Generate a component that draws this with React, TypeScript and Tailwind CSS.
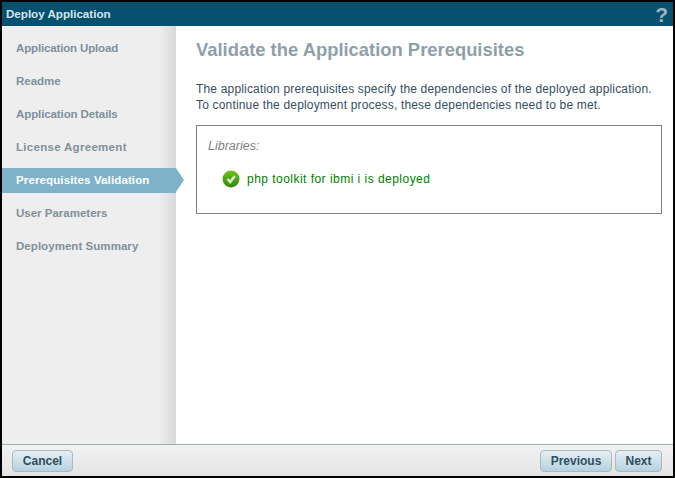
const STEPS = [
  { label: "Application Upload", tracking: "tracking-[-0.15px]" },
  { label: "Readme", tracking: "" },
  { label: "Application Details", tracking: "tracking-[-0.1px]" },
  { label: "License Agreement", tracking: "tracking-[0.3px]" },
  { label: "Prerequisites Validation", tracking: "tracking-[0.13px]" },
  { label: "User Parameters", tracking: "" },
  { label: "Deployment Summary", tracking: "tracking-[0.05px]" },
];
const ACTIVE = "Prerequisites Validation";

function WizardButton({ label, width }: { label: string; width: string }) {
  return (
    <button
      className={`${width} h-[22px] rounded-[4px] border border-[#a9b9c2] bg-gradient-to-b from-[#e6eff3] to-[#b4d2e0] pt-px text-[12px] font-bold text-[#2f4f60]`}
    >
      {label}
    </button>
  );
}

function CheckIcon() {
  return (
    <svg width="18" height="18" viewBox="0 0 18 18">
      <defs>
        <linearGradient id="ok" x1="0" y1="0" x2="0" y2="1">
          <stop offset="0" stopColor="#6fc01f" />
          <stop offset="1" stopColor="#2f8a06" />
        </linearGradient>
      </defs>
      <circle cx="9" cy="9" r="8.5" fill="url(#ok)" />
      <path d="M5.5 9l2.7 3 4.6-6" fill="none" stroke="#d8edc6" strokeWidth="2.6" />
    </svg>
  );
}

export default function App() {
  return (
    <div className="flex h-[478px] w-[675px] flex-col border-2 border-black bg-white font-['Liberation_Sans',Arial,sans-serif]">
      <div className="flex h-6 shrink-0 items-center justify-between bg-[#07506e] pl-1 pr-[5px]">
        <span className="text-[11.6px] font-bold text-[#d5e6ee]">Deploy Application</span>
        <span className="text-[21px] leading-none font-bold text-[#9db4c0]">?</span>
      </div>
      <div className="flex min-h-0 flex-1">
        <div className="w-[174px] shrink-0 bg-gradient-to-r from-[#eeeeee] from-[90%] to-[#d9d9d9] pt-2.5">
          {STEPS.map(({ label, tracking }) => (
            <div key={label} className="relative mb-2 flex h-[25px] items-center pl-[14px]">
              {label === ACTIVE && (
                <>
                  <div className="absolute inset-0 bg-[#7fb2c9]" />
                  <div className="absolute top-0 left-full h-0 w-0 border-y-[12.5px] border-l-[8px] border-y-transparent border-l-[#7fb2c9]" />
                </>
              )}
              <span className={`relative text-[11.5px] font-bold ${tracking} ${label === ACTIVE ? "text-white" : "text-[#7f919b]"}`}>
                {label}
              </span>
            </div>
          ))}
        </div>
        <div className="min-w-0 flex-1 pt-[13px] pr-[11px] pl-5">
          <h1 className="text-[18.4px] leading-[22px] font-bold text-[#8f9fa8]">Validate the Application Prerequisites</h1>
          <p className="mt-[20px] text-[12px] leading-4 tracking-[0.17px] text-[#33505f]">
            The application prerequisites specify the dependencies of the deployed application.
            <br />
            To continue the deployment process, these dependencies need to be met.
          </p>
          <div className="mt-[12px] h-[89px] border border-[#808080] px-[11px] pt-[13px]">
            <div className="text-[12.5px] leading-[14px] text-[#808080] italic">Libraries:</div>
            <div className="mt-[17px] flex items-center gap-[7px] pl-[14px]">
              <CheckIcon />
              <span className="text-[12px] tracking-[0.47px] text-[#008000]">php toolkit for ibmi i is deployed</span>
            </div>
          </div>
        </div>
      </div>
      <div className="flex h-8 shrink-0 items-center justify-between border-t border-[#9fb0b5] bg-gradient-to-b from-[#f2f2f2] to-[#e4e4e4] pr-[11px] pl-2.5">
        <WizardButton label="Cancel" width="w-[61px]" />
        <div className="flex gap-[3px]">
          <WizardButton label="Previous" width="w-[72px]" />
          <WizardButton label="Next" width="w-[47px]" />
        </div>
      </div>
    </div>
  );
}
